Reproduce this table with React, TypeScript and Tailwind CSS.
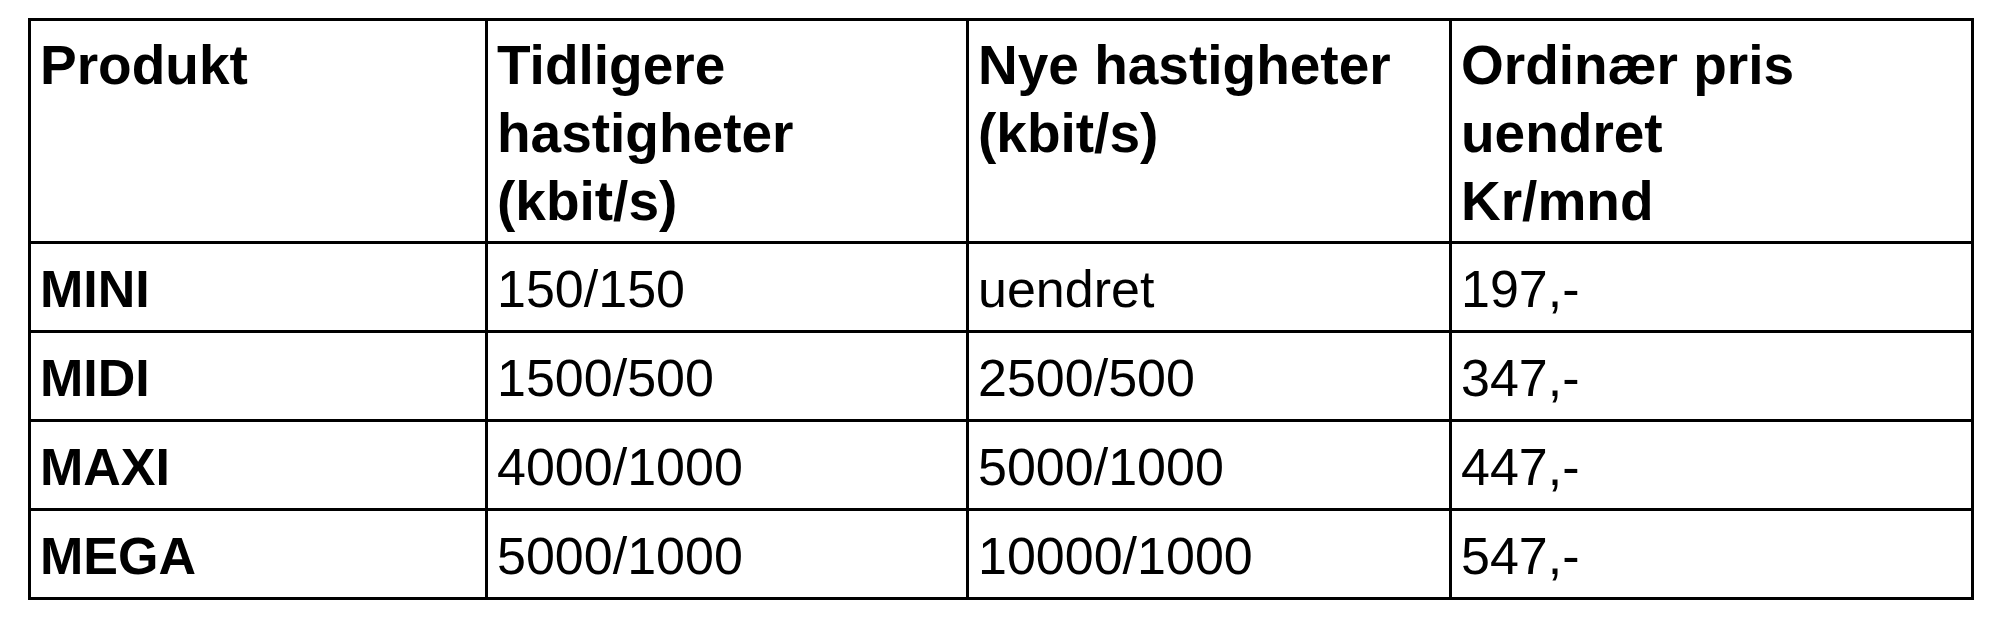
const HEADERS = [
  ['Produkt'],
  ['Tidligere', 'hastigheter', '(kbit/s)'],
  ['Nye hastigheter', '(kbit/s)'],
  ['Ordinær pris', 'uendret', 'Kr/mnd'],
];

const ROWS = [
  { produkt: 'MINI', tidligere: '150/150', nye: 'uendret', pris: '197,-' },
  { produkt: 'MIDI', tidligere: '1500/500', nye: '2500/500', pris: '347,-' },
  { produkt: 'MAXI', tidligere: '4000/1000', nye: '5000/1000', pris: '447,-' },
  { produkt: 'MEGA', tidligere: '5000/1000', nye: '10000/1000', pris: '547,-' },
];

export default function App() {
  return (
    <div className="min-h-screen bg-white pl-[28px] pt-[18px] font-['Liberation_Sans',Arial,sans-serif] text-black">
      <table className="w-[1946px] table-fixed border-collapse">
        <colgroup>
          <col className="w-[457px]" />
          <col className="w-[481px]" />
          <col className="w-[483px]" />
          <col />
        </colgroup>
        <thead>
          <tr className="h-[223px]">
            {HEADERS.map((lines, i) => (
              <th
                key={i}
                className="border-[3px] border-black px-[9px] pt-[10px] text-left align-top text-[55px] font-bold leading-[68px]"
              >
                {lines.map((line) => (
                  <div key={line} className="whitespace-nowrap">{line}</div>
                ))}
              </th>
            ))}
          </tr>
        </thead>
        <tbody>
          {ROWS.map((row) => (
            <tr key={row.produkt} className="h-[89px] text-[52px] leading-none">
              <td className="border-[3px] border-black px-[9px] pt-[4px] align-middle font-bold">{row.produkt}</td>
              <td className="border-[3px] border-black px-[9px] pt-[4px] align-middle">{row.tidligere}</td>
              <td className="border-[3px] border-black px-[9px] pt-[4px] align-middle">{row.nye}</td>
              <td className="border-[3px] border-black px-[9px] pt-[4px] align-middle">{row.pris}</td>
            </tr>
          ))}
        </tbody>
      </table>
    </div>
  );
}
